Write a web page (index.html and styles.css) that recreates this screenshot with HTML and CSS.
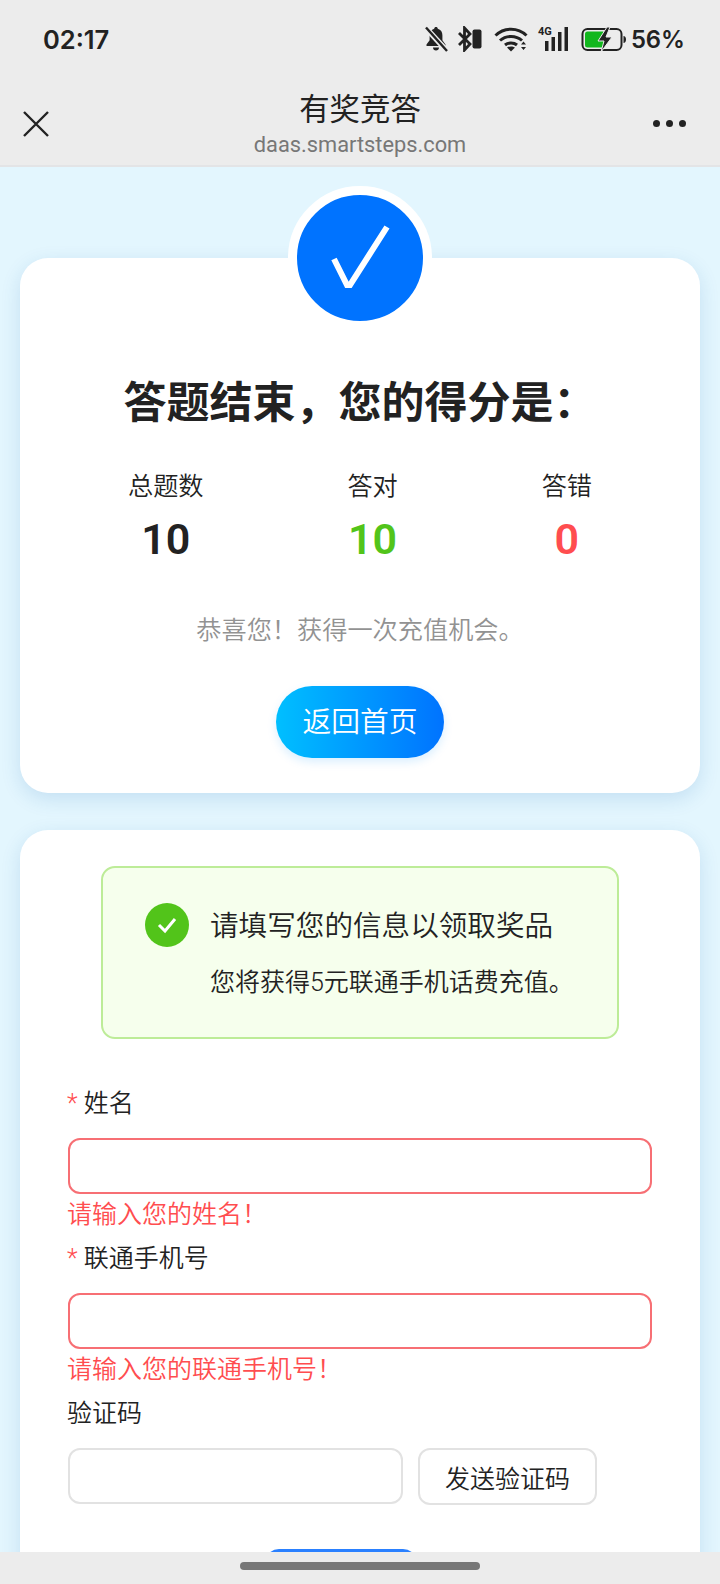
FILE: index.html
```html
<!DOCTYPE html>
<html lang="zh-CN">
<head>
<meta charset="utf-8">
<title>有奖竞答</title>
<link rel="stylesheet" href="styles.css">
</head>
<body>
<div class="phone">
  <div class="status">
    <span class="time">02:17</span>
    <div class="status-icons">
      <svg class="ic-bell" width="24" height="26" viewBox="0 0 24 26"><path d="M12 1c1 0 1.700.7 1.800 1.700 3 .8 4.600 3.300 4.600 6.500v5l3.100 4.300v1.500H2.500v-1.500l3.100-4.300v-5c0-3.200 1.600-5.700 4.600-6.500C10.300 1.700 11 1 12 1zM9 21.500h6c0 1.700-1.300 3-3 3s-3-1.300-3-3z" fill="#222"/><path d="M2 2l20 22" stroke="#ececec" stroke-width="5.500"/><path d="M2 1.500l21 23.500" stroke="#222" stroke-width="2.400"/></svg>
      <svg class="ic-bt" width="26" height="26" viewBox="0 0 26 26"><path d="M2 7l11 11-5.500 6V2L13 8 2 19" fill="none" stroke="#222" stroke-width="2.800"/><rect x="15.500" y="3.500" width="9" height="19" rx="2" fill="#222"/></svg>
      <svg class="ic-wifi" width="34" height="26" viewBox="0 0 34 26"><path d="M1.500 9.500C10 1 24 1 32.500 9.500M6 14.500c6-5.500 16-5.500 22 0M11 19c3.300-2.800 8.700-2.800 12 0" fill="none" stroke="#222" stroke-width="3"/><path d="M13 21.500c2-1.500 6-1.500 8 0L17 25.500z" fill="#222"/><path d="M27 18.500l2.500-3 2.500 3zM27 21l2.500 3 2.500-3z" fill="#222"/></svg>
      <span class="signal"><span class="net">4G</span><svg width="32" height="26" viewBox="0 0 32 26"><rect x="7" y="15" width="3.500" height="10" fill="#222"/><rect x="13.500" y="11" width="3.500" height="14" fill="#222"/><rect x="20" y="6" width="3.500" height="19" fill="#222"/><rect x="26.500" y="1" width="3.500" height="24" fill="#222"/></svg></span>
      <svg class="ic-batt" width="46" height="26" viewBox="0 0 46 26"><rect x="1.500" y="3" width="39" height="21" rx="5" fill="none" stroke="#222" stroke-width="2"/><rect x="4" y="5.500" width="20" height="16" rx="2.500" fill="#12b71e"/><path d="M42.500 10v7c1.500 0 2.500-1.500 2.500-3.500s-1-3.500-2.500-3.500z" fill="#222"/><path d="M26 1l-9 14h6l-3 11 11-15h-6l4-10z" fill="#222" stroke="#ececec" stroke-width="1"/></svg>
      <span class="pct">56%</span>
    </div>
  </div>
  <header class="nav">
    <svg class="close" width="28" height="28" viewBox="0 0 28 28"><path d="M2 2l24 24M26 2L2 26" stroke="#222" stroke-width="2.400" fill="none"/></svg>
    <div class="nav-title">
      <div class="title">有奖竞答</div>
      <div class="url">daas.smartsteps.com</div>
    </div>
    <div class="dots"><i></i><i></i><i></i></div>
  </header>
  <main class="content">
    <section class="card result">
      <div class="badge">
        <svg width="62" height="68" viewBox="0 0 62 68"><path d="M5 35l13 26h3L58 3" fill="none" stroke="#fff" stroke-width="6"/></svg>
      </div>
      <h1 class="result-title">答题结束，您的得分是：</h1>
      <div class="stats">
        <div class="stat"><div class="stat-label">总题数</div><div class="stat-num">10</div></div>
        <div class="stat"><div class="stat-label">答对</div><div class="stat-num ok">10</div></div>
        <div class="stat"><div class="stat-label">答错</div><div class="stat-num bad">0</div></div>
      </div>
      <p class="hint">恭喜您！获得一次充值机会。</p>
      <button class="home">返回首页</button>
    </section>
    <section class="card form">
      <div class="notice">
        <span class="notice-icon"><svg width="22" height="18" viewBox="0 0 22 18"><path d="M3 9l6 6L19 3" fill="none" stroke="#fff" stroke-width="3"/></svg></span>
        <div class="notice-text">
          <div class="notice-title">请填写您的信息以领取奖品</div>
          <div class="notice-sub">您将获得5元联通手机话费充值。</div>
        </div>
      </div>
      <div class="field">
        <label class="label"><span class="req">*</span> 姓名</label>
        <input class="input err">
        <div class="msg">请输入您的姓名！</div>
      </div>
      <div class="field">
        <label class="label"><span class="req">*</span> 联通手机号</label>
        <input class="input err">
        <div class="msg">请输入您的联通手机号！</div>
      </div>
      <div class="field">
        <label class="label">验证码</label>
        <div class="code-row">
          <input class="input code">
          <button class="send">发送验证码</button>
        </div>
      </div>
      <button class="submit"></button>
    </section>
  </main>
  <div class="home-bar"><span class="handle"></span></div>
</div>
</body>
</html>
```
FILE: styles.css
```css
* { box-sizing: border-box; }
html, body { margin: 0; padding: 0; }
body { font-family: "Roboto", "Noto Sans CJK SC", sans-serif; color: #222; background: #ececec; }
.phone { width: 720px; height: 1584px; display: flex; flex-direction: column; overflow: hidden; }

.status { height: 78px; flex: none; background: #ececec; display: flex; align-items: center; justify-content: space-between; padding: 0 35px 0 43px; }
.time { font: 600 25.500px "Inter", sans-serif; color: #222; }
.status-icons { display: flex; align-items: center; }
.ic-bt { margin-left: 9px; }
.ic-wifi { margin-left: 11px; }
.signal { display: flex; position: relative; margin-left: 10px; }
.ic-batt { margin-left: 11px; }
.net { position: absolute; left: 0; top: -1px; font: 700 11px "Roboto", sans-serif; }
.pct { margin-left: 4px; font: 600 23.800px "Inter", sans-serif; color: #222; }

.nav { height: 89px; flex: none; background: #ececec; border-bottom: 2px solid #e3e4e6; display: grid; grid-template-columns: 1fr auto 1fr; align-items: center; padding: 0 22px; }
.close { margin-top: 4px; }
.nav-title { text-align: center; margin-top: 4px; }
.title { font-size: 30.400px; line-height: 42px; color: #222; }
.url { font-size: 21.800px; line-height: 28px; color: #777; }
.dots { display: flex; gap: 6px; justify-self: end; margin-top: 4px; margin-right: 12px; }
.dots i { width: 7px; height: 7px; border-radius: 50%; background: #222; }

.content { flex: 1; min-height: 0; overflow: hidden; background: #e3f6fe; padding: 91px 20px 0; }
.card { background: #fff; border-radius: 28px; box-shadow: 0 6px 20px rgba(0, 90, 170, .14); }
.result { position: relative; height: 535px; padding-top: 115px; text-align: center; }
.badge { position: absolute; left: 268px; top: -72px; width: 144px; height: 144px; border-radius: 50%; background: #0073ff; border: 9px solid #fff; display: flex; align-items: center; justify-content: center; }
.result-title { margin: 0; font-size: 43px; line-height: 60px; font-weight: 700; color: #222; }
.stats { margin-top: 36px; padding: 0 36px; display: flex; justify-content: space-around; }
.stat-label { font-size: 25.200px; line-height: 36px; color: #222; font-weight: 350; }
.stat-num { margin-top: 3px; font-size: 43px; line-height: 62px; font-weight: 600; color: #222; }
.ok { color: #52c41a; }
.bad { color: #ff4d4f; }
.hint { margin: 41px 0 0; font-size: 25.200px; line-height: 40px; color: #929292; font-weight: 350; }
.home { margin-top: 35px; padding: 0 0 5px; width: 168px; height: 72px; border: 0; border-radius: 36px; font: 350 28.800px "Noto Sans CJK SC", sans-serif; color: #fff; background: linear-gradient(90deg, #00bfff, #0073ff); box-shadow: 0 4px 10px rgba(0, 150, 255, .15); }

.form { margin-top: 37px; height: 800px; padding: 36px 48px 0; }
.notice { margin: 0 33px 43px; height: 173px; background: #f6ffed; border: 2px solid #bdec98; border-radius: 14px; padding: 35px 42px; display: flex; gap: 21px; }
.notice-icon { width: 44px; height: 44px; flex: none; border-radius: 50%; background: #52c41a; display: flex; align-items: center; justify-content: center; }
.notice-text { white-space: nowrap; font-weight: 350; padding-top: 1px; }
.notice-title { font-size: 28.600px; line-height: 44px; color: #222; }
.notice-sub { margin-top: 17px; font-size: 25px; line-height: 36px; color: #222; }
.label { display: block; margin-left: -1px; font-size: 25px; line-height: 36px; padding-top: 4px; color: #222; font-weight: 350; }
.req { color: #ff4d4f; }
.input { display: block; width: 100%; height: 56px; margin-top: 16px; border: 2px solid #e2e2e2; border-radius: 12px; background: #fff; outline: none; }
.err { border-color: #f76f74; }
.msg { margin-left: -1px; padding: 2px 0 3px; font-size: 25px; line-height: 38px; color: #ff4d4f; font-weight: 350; }
.code-row { display: flex; gap: 15px; align-items: flex-start; }
.code { width: 335px; flex: none; }
.send { margin-top: 16px; width: 179px; height: 57px; background: #fff; border: 2px solid #e2e2e2; border-radius: 12px; font: 350 25px "Noto Sans CJK SC", sans-serif; color: #222; }
.submit { display: block; margin: 44px 0 0 197px; width: 152px; height: 70px; border: 0; border-radius: 14px; background: #2a80ff; }

.home-bar { height: 32px; flex: none; background: #ececec; display: flex; justify-content: center; align-items: center; }
.handle { width: 240px; height: 8px; margin-bottom: 4px; border-radius: 4px; background: #777; }
```
